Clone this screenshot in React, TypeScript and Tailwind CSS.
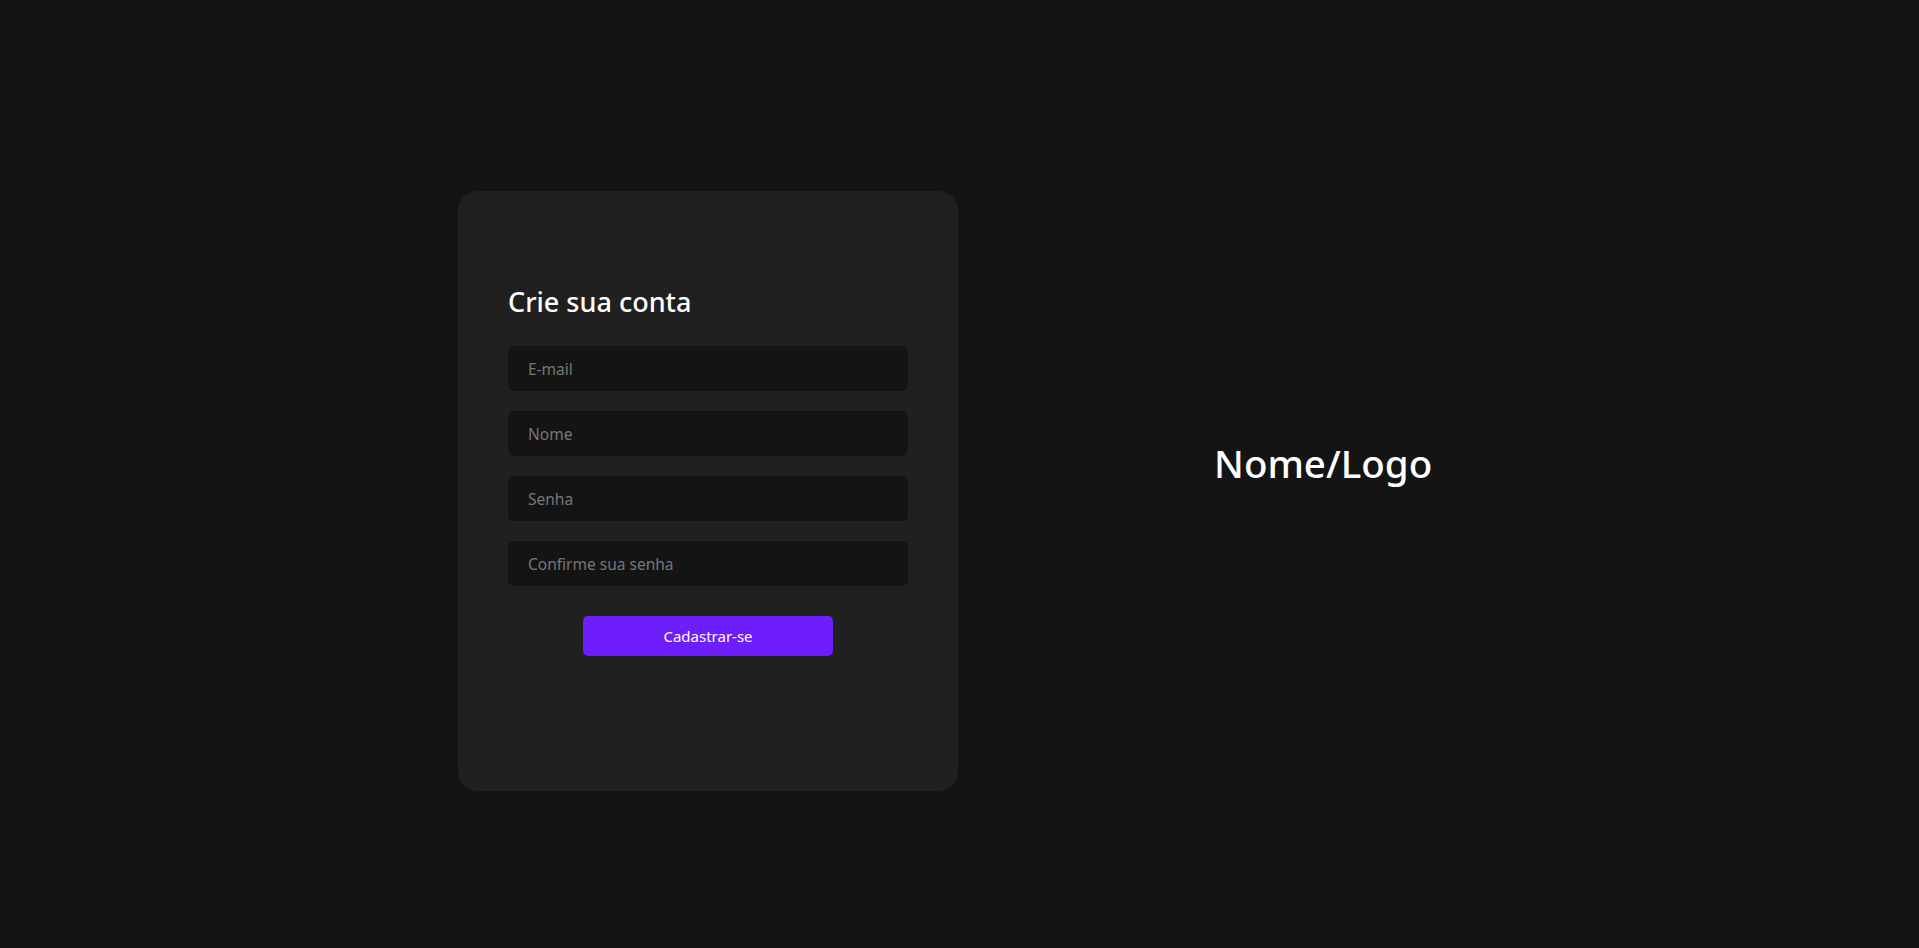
const fields = ["E-mail", "Nome", "Senha", "Confirme sua senha"]

export default function App() {
  return (
    <div
      className="flex min-h-screen items-center bg-[#141414] pl-[458px] text-white"
      style={{ fontFamily: '"Noto Sans", "Open Sans", sans-serif' }}
    >
      <div className="mt-[34px] flex h-[600px] w-[500px] shrink-0 flex-col rounded-[20px] bg-[#202020] px-[50px] pt-[95px]">
        <h1 className="text-[27px] leading-[32px] font-medium">Crie sua conta</h1>
        <form className="mt-[28px] flex flex-col gap-5" onSubmit={(e) => e.preventDefault()}>
          {fields.map((f) => (
            <input
              key={f}
              type="text"
              placeholder={f}
              className="h-[45px] w-full rounded-md bg-[#141414] px-5 text-[15.5px] text-white outline-none placeholder:text-[#777777]"
            />
          ))}
          <button
            type="submit"
            className="mx-auto mt-[10px] h-10 w-[250px] rounded-[5px] bg-[#6e1dfb] text-[15px] text-white"
          >
            Cadastrar-se
          </button>
        </form>
      </div>
      <div className="mb-5 ml-[256px] text-[38.5px] font-medium">Nome/Logo</div>
    </div>
  )
}
